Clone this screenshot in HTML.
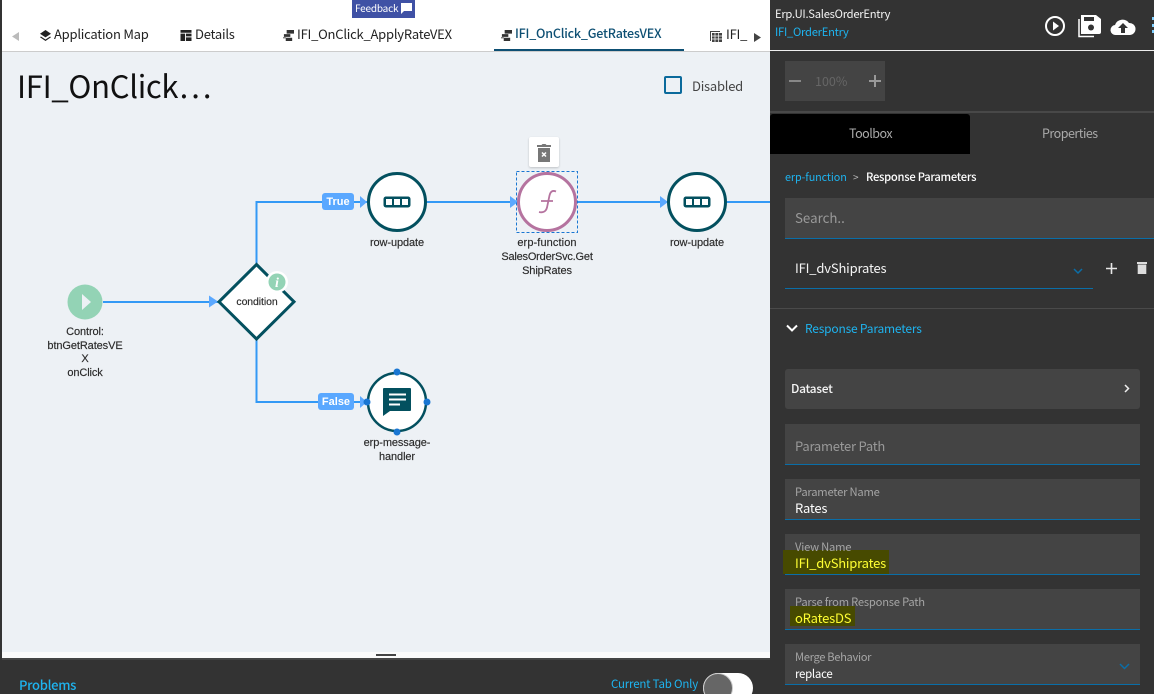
<!DOCTYPE html>
<html><head><meta charset="utf-8"><style>
html,body{margin:0;padding:0;width:1154px;height:694px;overflow:hidden;background:#fff}
body{position:relative;font-family:"Noto Sans CJK SC","Liberation Sans",sans-serif}
.a{position:absolute}
.t{position:absolute;white-space:nowrap;line-height:1}
.tab{font-size:13px;letter-spacing:-.23px;color:#222;top:27px}
.n{position:absolute;font-family:"Liberation Sans",sans-serif;font-size:11px;line-height:14px;color:#2a2a2a;text-align:center;white-space:nowrap;letter-spacing:-.1px;-webkit-text-stroke:.15px #2a2a2a}
.f{position:absolute;left:785px;width:355px;height:40px;background:#444;border-bottom:1px solid #0a6ea8}
.l{position:absolute;left:795px;font-size:11.2px;letter-spacing:-.22px;line-height:1;color:#a5a5a5;white-space:nowrap}
.v{position:absolute;left:795px;font-size:13px;letter-spacing:-.2px;line-height:1;color:#fff;white-space:nowrap}
</style></head><body>
<div class="a" style="left:0;top:0;width:2px;height:694px;background:#333"></div>
<div class="a" style="left:2px;top:51px;width:768px;height:601px;background:#edf1f5;border-top:1px solid #ccc;box-sizing:border-box"></div>
<div class="a" style="left:2px;top:652px;width:768px;height:6px;background:#fafafa"></div>
<div class="a" style="left:376px;top:654px;width:20px;height:2px;background:#444"></div>
<div class="a" style="left:2px;top:658px;width:768px;height:36px;background:#333;border-top:2px solid #444;box-sizing:border-box"></div>

<div class="a" style="left:352px;top:0;width:63px;height:18px;background:#3f51a5"></div>
<div class="t" style="left:355px;top:3px;font-size:10px;letter-spacing:-.2px;color:#fff">Feedback</div>
<svg class="a" style="left:401px;top:3px" width="11" height="11" viewBox="0 0 11 11"><path d="M0 0h11v8H3L0 11z" fill="#fff"/></svg>

<svg class="a" style="left:12px;top:32px" width="7" height="9"><path d="M7 0v9L0 4.500z" fill="#bbb"/></svg>
<svg class="a" style="left:40px;top:30px" width="11" height="12" viewBox="0 0 12 13"><path d="M6 0l6 4-6 4-6-4z" fill="#222"/><path d="M1 7l5 3.300 5-3.300 1 .9-6 4.100-6-4.100z" fill="#222"/></svg>
<div class="t tab" style="left:54px">Application Map</div>
<svg class="a" style="left:180px;top:30px" width="12" height="11" viewBox="0 0 12 12"><path d="M0 0h12v3H0zM0 4h5v8H0zM6 4h6v3H6zM6 8h6v4H6z" fill="#222"/></svg>
<div class="t tab" style="left:195px">Details</div>
<svg class="a" style="left:283px;top:30px" width="11" height="11" viewBox="0 0 12 12"><path d="M4 0h8v4H4zM1 4.500h7v3H1zM0 8h3v1H0zM3 8.500h7V12H3z" fill="#333"/></svg>
<div class="t tab" style="left:297px">IFI_OnClick_ApplyRateVEX</div>
<svg class="a" style="left:501px;top:30px" width="11" height="11" viewBox="0 0 12 12"><path d="M4 0h8v4H4zM1 4.500h7v3H1zM0 8h3v1H0zM3 8.500h7V12H3z" fill="#333"/></svg>
<div class="t" style="left:515px;top:27px;font-size:12.5px;letter-spacing:-.2px;font-weight:500;color:#0d4f73">IFI_OnClick_GetRatesVEX</div>
<div class="a" style="left:494px;top:49px;width:190px;height:2px;background:#0d4f73"></div>
<svg class="a" style="left:710px;top:30px" width="12" height="12"><path d="M0 1h10v1H1v9H0zM2 3h10v9H2z" fill="#444"/><path d="M2 6h10M2 9h10M5 3v9M8.500 3v9" stroke="#fff" stroke-width=".7"/></svg>
<div class="t tab" style="left:726px">IFI_</div>
<svg class="a" style="left:754px;top:33px" width="7" height="9"><path d="M0 0v9l7-4.500z" fill="#444"/></svg>

<div class="t" style="left:17px;top:69px;font-size:31px;letter-spacing:-.3px;color:#111">IFI_OnClick…</div>
<div class="a" style="left:664px;top:76px;width:18px;height:18px;border:2px solid #0b6a9c;border-radius:2px;box-sizing:border-box"></div>
<div class="t" style="left:692px;top:79px;font-size:13px;letter-spacing:-.24px;color:#444">Disabled</div>

<svg class="a" style="left:0;top:0" width="770" height="660">
<g fill="none" stroke="#3399f5" stroke-width="2">
<path d="M103 302H218"/><path d="M256.500 264V202H367"/><path d="M256.500 340V402H367"/><path d="M427 202H667"/><path d="M727 202H770"/>
</g>
<g fill="#5aa8ff"><path d="M209 295.500l9 6-9 6z"/><path d="M360 196l7 6-7 6z"/><path d="M510 196l8 6-8 6z"/><path d="M660 196l8 6-8 6z"/><path d="M360 396l7 6-7 6z"/></g>
<circle cx="85" cy="302" r="17.500" fill="#93d3b5"/><path d="M82 294l9 8-9 8z" fill="#edf1f5"/>
<path d="M256.500 264.500L294 301.800 256.500 339 219 301.800z" fill="#fff" stroke="#03505f" stroke-width="3"/>
<circle cx="277" cy="282" r="11" fill="#fff"/><circle cx="277" cy="282" r="8.500" fill="#93d3b5"/>
<text x="277" y="287" font-family="Liberation Serif,serif" font-style="italic" font-weight="700" font-size="14" fill="#fff" text-anchor="middle">i</text>
<circle cx="397" cy="202" r="28.500" fill="#fff" stroke="#03505f" stroke-width="3"/>
<rect x="383.500" y="196.500" width="27" height="11" rx="2.500" fill="#03505f"/><path d="M386 199h6v6h-6zM394 199h6v6h-6zM402 199h6v6h-6z" fill="#fff"/>
<circle cx="547" cy="202" r="28.500" fill="#fff" stroke="#b5739f" stroke-width="3"/>
<rect x="516.500" y="171.500" width="61" height="61" fill="none" stroke="#1976d2" stroke-dasharray="3 2"/>
<path d="M556 191.500c-3.500-1.500-5.500 0-6.500 4l-2.500 12c-1 4-4 5.500-8 4.500M541 201h12" fill="none" stroke="#b5739f" stroke-width="1.800"/>
<circle cx="697" cy="202" r="28.500" fill="#fff" stroke="#03505f" stroke-width="3"/>
<rect x="683.500" y="196.500" width="27" height="11" rx="2.500" fill="#03505f"/><path d="M686 199h6v6h-6zM694 199h6v6h-6zM702 199h6v6h-6z" fill="#fff"/>
<circle cx="397" cy="402" r="29" fill="#fff" stroke="#03505f" stroke-width="2.500"/>
<path d="M384 388h26a1 1 0 0 1 1 1v21a1 1 0 0 1-1 1h-20l-7 5v-27a1 1 0 0 1 1-1z" fill="#03505f"/>
<path d="M389 393.500h17v2h-17zM389 398.500h17v2h-17zM389 403.500h11v2h-11z" fill="#fff"/>
<g fill="#1976d2"><circle cx="397" cy="372" r="3.500"/><circle cx="397" cy="432" r="3.500"/><circle cx="367" cy="402" r="3.500"/><circle cx="427" cy="402" r="3.500"/></g>
<rect x="322" y="193" width="32" height="17" rx="3" fill="#5aa8ff"/>
<rect x="318" y="393" width="36" height="17" rx="3" fill="#5aa8ff"/>
<text x="338" y="205" font-family="Liberation Sans,sans-serif" font-weight="700" font-size="11" fill="#fff" text-anchor="middle">True</text>
<text x="336" y="405" font-family="Liberation Sans,sans-serif" font-weight="700" font-size="11" fill="#fff" text-anchor="middle">False</text>
</svg>

<div class="a" style="left:529px;top:137px;width:30px;height:30px;background:#fff;border-radius:2px;box-shadow:0 1px 2px rgba(0,0,0,.2)"></div>
<svg class="a" style="left:537px;top:144px" width="14" height="18" viewBox="0 0 14 18"><path d="M0 1h4.500l1-1h3l1 1H14v2H0zM1 4h12v14H1z" fill="#777"/><path d="M5 8.500l4 4M9 8.500l-4 4" stroke="#fff" stroke-width="1.500"/></svg>

<div class="n" style="left:236px;top:295px;width:42px;font-size:10.500px">condition</div>
<div class="n" style="left:40px;top:326px;width:90px;line-height:13.700px">Control:<br>btnGetRatesVE<br>X<br>onClick</div>
<div class="n" style="left:352px;top:236px;width:90px">row-update</div>
<div class="n" style="left:497px;top:236px;width:100px"><span style="letter-spacing:.1px">erp-function</span><br><span style="letter-spacing:-.2px">SalesOrderSvc.Get</span><br>ShipRates</div>
<div class="n" style="left:652px;top:236px;width:90px">row-update</div>
<div class="n" style="left:352px;top:436px;width:90px">erp-message-<br>handler</div>

<div class="t" style="left:19px;top:678px;font-size:13px;letter-spacing:-.3px;font-weight:500;color:#1eb4f0">Problems</div>
<div class="t" style="left:611px;top:679px;font-size:11.500px;letter-spacing:-.2px;color:#1eb4f0">Current Tab Only</div>
<div class="a" style="left:703px;top:673px;width:50px;height:30px;background:#fff;border-radius:15px"></div>
<div class="a" style="left:703px;top:673px;width:30px;height:30px;background:#666;border:1.500px solid #ccc;border-radius:15px;box-sizing:border-box"></div>

<!-- right panel -->
<div class="a" style="left:770px;top:0;width:384px;height:694px;background:#333"></div>
<div class="t" style="left:775px;top:9px;font-size:11.200px;letter-spacing:-.25px;color:#f5f5f5">Erp.UI.SalesOrderEntry</div>
<div class="t" style="left:775px;top:27px;font-size:11.200px;letter-spacing:-.25px;color:#1eb4f0">IFI_OrderEntry</div>
<div class="a" style="left:770px;top:50px;width:384px;height:1px;background:#eee"></div>
<svg class="a" style="left:1040px;top:10px" width="114" height="32" viewBox="0 0 114 32">
<circle cx="15" cy="16" r="9" fill="none" stroke="#fff" stroke-width="2"/><path d="M13 11.500v9l6-4.500z" fill="#fff"/>
<path d="M41 5h15l5 4v13a2 2 0 0 1-2 2H41z" fill="#fff"/><rect x="44" y="7" width="10" height="4" fill="#333"/><circle cx="51" cy="17.500" r="3" fill="#333"/><path d="M39 9V26.500H54" fill="none" stroke="#fff" stroke-width="1.500"/>
<path d="M76 25a5 5 0 0 1-1-10A8 8 0 0 1 89 13a6 6 0 0 1 1 12z" fill="#fff"/><path d="M83 13l5 5h-3v5h-4v-5h-3z" fill="#333"/>
<path d="M112 7h2v3h-2zM112 14h2v3h-2zM112 20h2v3h-2z" fill="#7fcfff"/>
</svg>
<div class="a" style="left:785px;top:61px;width:100px;height:40px;background:#444"></div>
<div class="a" style="left:789px;top:80px;width:12px;height:2px;background:#888"></div>
<div class="t" style="left:815px;top:75px;font-size:12.500px;color:#666">100%</div>
<svg class="a" style="left:869px;top:75px" width="12" height="12"><path d="M5 0h2v5h5v2H7v5H5V7H0V5h5z" fill="#999"/></svg>
<div class="a" style="left:770px;top:111px;width:384px;height:2px;background:#484848"></div>
<div class="a" style="left:770px;top:114px;width:200px;height:40px;background:#000;border-radius:3px 3px 0 0"></div>
<div class="t" style="left:849px;top:127px;font-size:12.500px;letter-spacing:-.5px;color:#aaa">Toolbox</div>
<div class="t" style="left:1042px;top:127px;font-size:12.500px;letter-spacing:-.5px;color:#aaa">Properties</div>
<div class="t" style="left:785px;top:172px;font-size:10.800px;letter-spacing:-.1px;color:#1eb4f0">erp-function</div>
<div class="t" style="left:853px;top:172px;font-size:10px;color:#bbb">&gt;</div>
<div class="t" style="left:866px;top:172px;font-size:11.200px;letter-spacing:-.26px;font-weight:500;color:#fff">Response Parameters</div>
<div class="a" style="left:785px;top:198px;width:369px;height:41px;background:#444;border-bottom:1px solid #0a6ea8;box-sizing:border-box"></div>
<div class="t" style="left:795px;top:211px;font-size:13.300px;color:#999">Search..</div>
<div class="t" style="left:795px;top:261px;font-size:13px;letter-spacing:-.17px;color:#f5f5f5">IFI_dvShiprates</div>
<svg class="a" style="left:1073px;top:268px" width="10" height="7"><path d="M1 1l4 4 4-4" fill="none" stroke="#0a6ea8" stroke-width="1.500"/></svg>
<div class="a" style="left:785px;top:288px;width:308px;height:1px;background:#0a6ea8"></div>
<svg class="a" style="left:1106px;top:263px" width="11" height="11"><path d="M4.700 0h1.600v4.700H11v1.600H6.300V11H4.700V6.300H0V4.700h4.700z" fill="#e6e6e6"/></svg>
<svg class="a" style="left:1137px;top:262px" width="10" height="12"><path d="M0 0h10v2H0zM.7 2.500h8.600V12H.7z" fill="#ddd"/></svg>
<div class="a" style="left:770px;top:308px;width:384px;height:1px;background:#4a4a4a"></div>
<svg class="a" style="left:786px;top:324px" width="12" height="9"><path d="M1 1.500l5 5 5-5" fill="none" stroke="#fff" stroke-width="2"/></svg>
<div class="t" style="left:805px;top:323px;font-size:12px;letter-spacing:-.2px;color:#1eb4f0">Response Parameters</div>
<div class="a" style="left:785px;top:369px;width:355px;height:40px;background:#444;border-radius:3px"></div>
<div class="t" style="left:791px;top:383px;font-size:12px;letter-spacing:-.3px;font-weight:500;color:#f5f5f5">Dataset</div>
<svg class="a" style="left:1124px;top:384px" width="6" height="9"><path d="M1 1l3.500 3.500L1 8" fill="none" stroke="#eee" stroke-width="1.500"/></svg>

<div class="f" style="top:424px"></div>
<div class="t" style="left:795px;top:439px;font-size:13px;letter-spacing:-.24px;color:#999">Parameter Path</div>
<div class="f" style="top:479px"></div>
<div class="l" style="top:487px">Parameter Name</div>
<div class="v" style="top:501px">Rates</div>
<div class="f" style="top:534px"></div>
<div class="a" style="left:783px;top:550px;width:106px;height:24px;background:#474a00"></div>
<div class="l" style="top:542px">View Name</div>
<div class="v" style="top:556px;color:#ffff33">IFI_dvShiprates</div>
<div class="f" style="top:589px"></div>
<div class="a" style="left:790px;top:606px;width:65px;height:20px;background:#474a00"></div>
<div class="l" style="top:597px">Parse from Response Path</div>
<div class="v" style="top:611px;color:#ffff33">oRatesDS</div>
<div class="f" style="top:644px"></div>
<div class="l" style="top:652px;letter-spacing:-.35px">Merge Behavior</div>
<div class="t" style="left:795px;top:669px;font-size:11.500px;letter-spacing:-.3px;color:#fff">replace</div>
<svg class="a" style="left:1119px;top:663px" width="11" height="7"><path d="M1 1l4.500 4.500L10 1" fill="none" stroke="#0a6ea8" stroke-width="1.500"/></svg>
</body></html>
